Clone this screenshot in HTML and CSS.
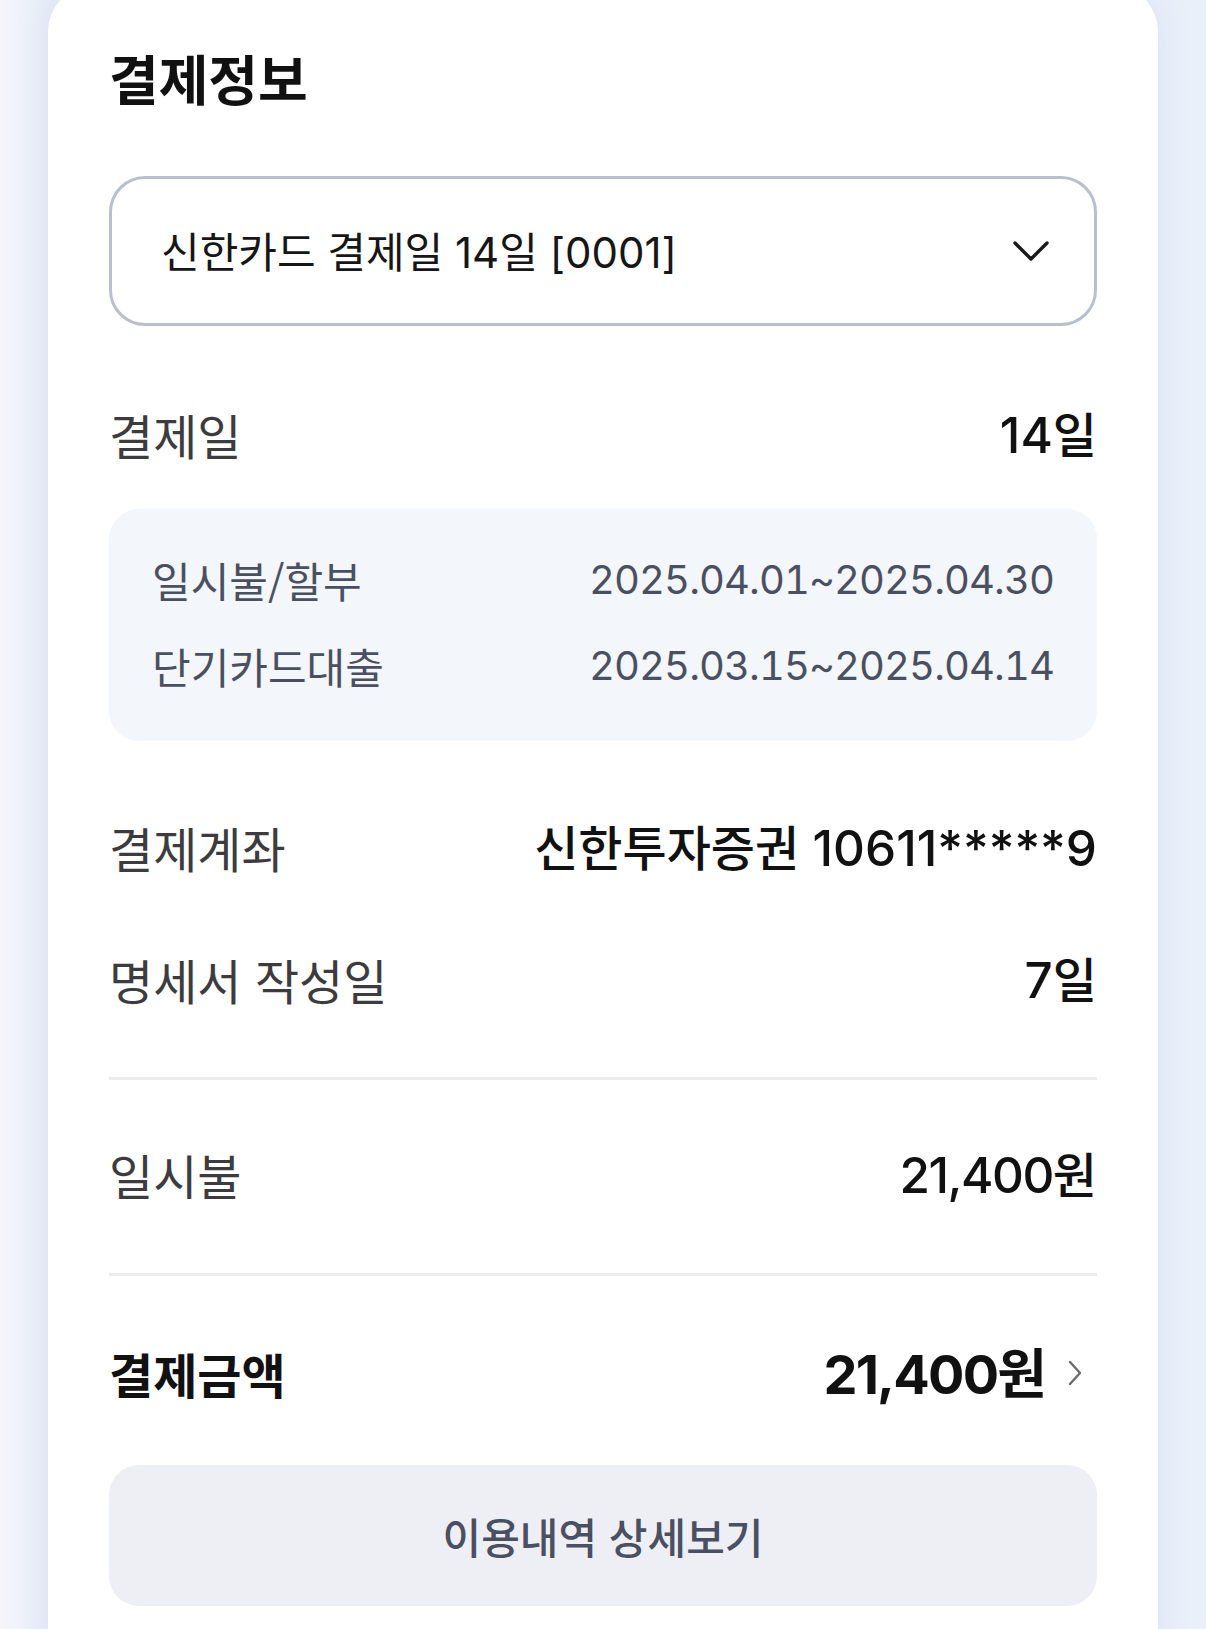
FILE: index.html
```html
<!DOCTYPE html>
<html lang="ko">
<head>
<meta charset="utf-8">
<title>결제정보</title>
<link rel="stylesheet" href="styles.css">
</head>
<body>
<div class="page">
  <section class="card">
    <h1 class="title">결제정보</h1>

    <div class="select">
      <span class="select-text">신한카드 결제일 <span class="n">14</span>일 <span class="n">[0001]</span></span>
      <svg class="chev-down" width="36" height="22" viewBox="0 0 36 22"><path d="M2 3 L18 19 L34 3" fill="none" stroke="#1a1a1a" stroke-width="3.4" stroke-linecap="round" stroke-linejoin="round"/></svg>
    </div>

    <div class="row row-first">
      <span class="label">결제일</span>
      <span class="value"><span class="n">14</span>일</span>
    </div>

    <div class="period">
      <div class="period-row">
        <span class="period-label">일시불/할부</span>
        <span class="period-date">2025.04.01~2025.04.30</span>
      </div>
      <div class="period-row">
        <span class="period-label">단기카드대출</span>
        <span class="period-date">2025.03.15~2025.04.14</span>
      </div>
    </div>

    <div class="row row-after-box">
      <span class="label">결제계좌</span>
      <span class="value">신한투자증권 <span class="n">10611*****9</span></span>
    </div>
    <div class="row">
      <span class="label">명세서 작성일</span>
      <span class="value"><span class="n">7</span>일</span>
    </div>

    <hr class="divider divider-1">

    <div class="row">
      <span class="label">일시불</span>
      <span class="value"><span class="n amount">21,400</span>원</span>
    </div>

    <hr class="divider divider-2">

    <div class="row row-total">
      <span class="label label-strong">결제금액</span>
      <span class="total">
        <span class="value value-strong"><span class="n amount">21,400</span>원</span>
        <svg class="chev-right" width="26" height="26" viewBox="0 0 26 26"><path d="M3 2 L13 13 L3 24" fill="none" stroke="#6b6b6b" stroke-width="2.4" stroke-linecap="round" stroke-linejoin="round"/></svg>
      </span>
    </div>

    <button class="detail-btn" type="button">이용내역 상세보기</button>
  </section>
</div>
</body>
</html>
```

FILE: styles.css
```css
* { box-sizing: border-box; }

html, body {
  margin: 0;
  padding: 0;
}

body {
  width: 1206px;
  height: 1629px;
  overflow: hidden;
  background: linear-gradient(90deg, #f4f6fb 0%, #e7edf8 4%, #e9eef9 96%, #eaf0fa 100%);
  font-family: "Noto Sans CJK KR", "Noto Sans", sans-serif;
  color: #111;
}

.page {
  padding: 0 48px;
}

.card {
  margin-top: -16px;
  background: #fff;
  border-radius: 48px;
  padding: 67px 61px 40px;
  min-height: 1700px;
  box-shadow: 0 0 30px rgba(180, 195, 225, 0.25);
}

.title {
  margin: 0;
  height: 60px;
  line-height: 60px;
  font-size: 54px;
  font-weight: 700;
  color: #111;
  margin-top: -3px;
  margin-bottom: 3px;
}

.select {
  margin-top: 68px;
  height: 150px;
  border: 3px solid #b9bfcc;
  border-radius: 36px;
  display: flex;
  align-items: center;
  justify-content: space-between;
  padding: 0 45px 0 49px;
}

.select-text {
  font-size: 42px;
  color: #161616;
  line-height: 1;
}

.n {
  font-family: Inter, "Noto Sans", sans-serif;
  font-size: 1em;
}

.chev-down { display: block; }

.row {
  height: 132px;
  display: flex;
  align-items: center;
  justify-content: space-between;
}

.row-first { margin-top: 42px; }

.label {
  font-size: 48px;
  color: #3c3c3e;
  line-height: 1;
}

.value {
  font-size: 48px;
  font-weight: 500;
  color: #111;
  line-height: 1;
}

.value .n {
  font-size: 1.03em;
}

.value .amount {
  letter-spacing: -1.5px;
}

.period {
  margin-top: 9px;
  height: 232px;
  background: #f3f6fb;
  border-radius: 30px;
  padding: 28px 43px 32px 43px;
}

.period-row {
  height: 86px;
  display: flex;
  align-items: center;
  justify-content: space-between;
  color: #4b5060;
}

.period-label {
  font-size: 42px;
  line-height: 1;
}

.period-date {
  font-family: Inter, "Noto Sans", sans-serif;
  font-size: 40px;
  font-variant-numeric: tabular-nums;
  letter-spacing: -0.9px;
  line-height: 1;
}

.row-after-box { margin-top: 40px; }

.divider {
  border: 0;
  height: 3px;
  background: #ececef;
  margin: 0;
}

.divider-1 { margin-top: 32px; margin-bottom: 28px; }
.divider-2 { margin-top: 33px; margin-bottom: 31px; }

.label-strong {
  font-weight: 700;
  color: #111;
}

.total {
  display: flex;
  align-items: center;
  gap: 20px;
  margin-right: 4px;
}

.value-strong {
  font-size: 54px;
  font-weight: 700;
}

.value-strong .n {
  font-size: 1em;
}

.value-strong .amount {
  letter-spacing: -1.8px;
}

.chev-right { display: block; }

.detail-btn {
  display: block;
  width: 100%;
  margin-top: 26px;
  height: 141px;
  border: 0;
  border-radius: 30px;
  background: #eeeff5;
  font-family: "Noto Sans CJK KR", "Noto Sans", sans-serif;
  font-size: 42px;
  font-weight: 500;
  color: #4a4f62;
  padding: 0;
}
```
